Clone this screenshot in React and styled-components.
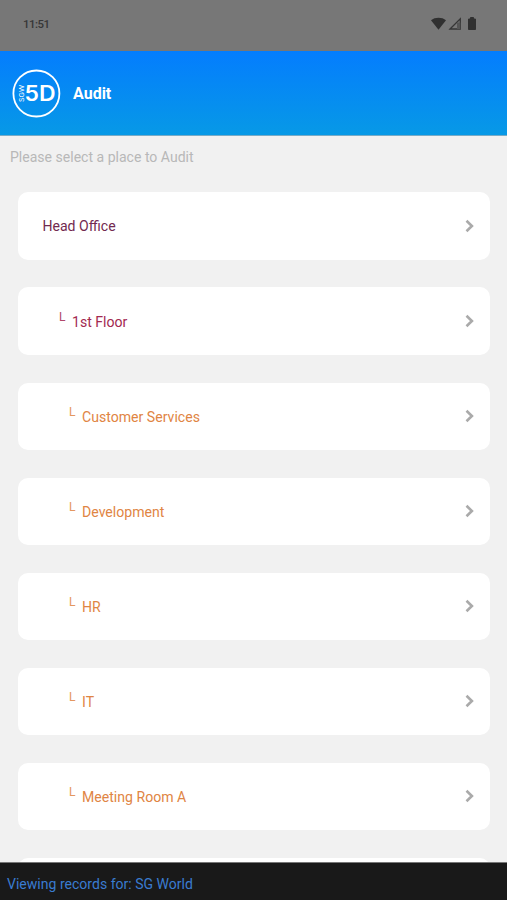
import React from "react";
import styled, { createGlobalStyle } from "styled-components";

const GlobalStyle = createGlobalStyle`
    * {
        box-sizing: border-box;
    }
    body {
        margin: 0;
        background: #f1f1f1;
        font-family: Roboto, "Liberation Sans", sans-serif;
    }
`;

const Screen = styled.div`
    display: flex;
    flex-direction: column;
    height: 900px;
    overflow: hidden;
    background: #f1f1f1;
`;

const StatusBar = styled.div`
    display: flex;
    flex: none;
    align-items: center;
    justify-content: space-between;
    height: 51px;
    padding: 0 29px 4px 23px;
    background: #777;
    color: #363636;
`;

const Clock = styled.span`
    font-size: 11.4px;
    font-weight: 500;
    letter-spacing: -0.5px;
`;

const Header = styled.header`
    display: flex;
    flex: none;
    align-items: center;
    gap: 12px;
    height: 85px;
    padding: 0 12px;
    background: linear-gradient(#047dfe, #0799e6);
    border-bottom: 1px solid #78abc6;
`;

const Title = styled.h1`
    margin: 1px 0 0;
    color: white;
    font-size: 16px;
    font-weight: 700;
`;

const Hint = styled.p`
    flex: none;
    margin: 0;
    padding: 11px 10px 0;
    height: 56.4px;
    color: #b8b8b8;
    font-size: 14.05px;
    line-height: 20px;
`;

const List = styled.ul`
    display: flex;
    flex: 1;
    flex-direction: column;
    gap: 27.9px;
    min-height: 0;
    margin: 0;
    padding: 0 17px 0 18px;
    overflow: hidden;
    list-style: none;
`;

const Place = styled.li`
    display: flex;
    flex: none;
    align-items: center;
    height: 67.2px;
    padding: 0 15px 0 ${({ indent }) => indent}px;
    border-radius: 10px;
    background: white;
    color: ${({ color }) => color};
    font-size: 14.1px;
`;

const Branch = styled.span`
    width: 13px;
    margin-top: -8px;
    font-size: 12px;
    font-weight: 400;
    opacity: 0.85;
`;

const Name = styled.span`
    flex: 1;
    margin-top: 1px;
`;

const Footer = styled.footer`
    flex: none;
    height: 38px;
    padding: 11px 7px 0;
    border-top: 1px solid #777;
    background: #191919;
    color: #3a7cd0;
    font-size: 14.05px;
    line-height: 20px;
`;

const places = [
    { name: "Head Office", indent: 24.4, color: "#722a50" },
    { name: "1st Floor", indent: 41, color: "#a32951", nested: true },
    { name: "Customer Services", indent: 51, color: "#df8544", nested: true },
    { name: "Development", indent: 51, color: "#df8544", nested: true },
    { name: "HR", indent: 51, color: "#df8544", nested: true },
    { name: "IT", indent: 51, color: "#df8544", nested: true },
    { name: "Meeting Room A", indent: 51, color: "#df8544", nested: true },
    { name: "", indent: 51, color: "#df8544" },
];

const StatusIcons = () => (
    <svg width="48" height="16" viewBox="0 0 48 16">
        <path d="M1 4.3C5 1 12 1 16 4.3L8.5 13.7z" fill="#303030" />
        <path d="M20 13L30.3 2.8V13z" fill="none" stroke="#363636" strokeWidth="1.3" />
        <path d="M27 6.5h3.3V13H27z" fill="#555" />
        <path d="M38.5 3h2V1.5h3V3h2v10.5h-7z" fill="#303030" stroke="#303030" strokeLinejoin="round" />
    </svg>
);

const Logo = () => (
    <svg width="49" height="49" viewBox="0 0 49 49" fill="white">
        <circle cx="24.4" cy="24.5" r="23" fill="none" stroke="white" strokeWidth="1.8" />
        <text
            transform="translate(12.2 33) rotate(-90)"
            fontFamily="Inter, sans-serif"
            fontSize="6.8"
            fontWeight="400"
            textLength="17"
            lengthAdjust="spacingAndGlyphs"
        >
            SGW
        </text>
        <text
            x="12.6"
            y="32"
            fontFamily="Inter, sans-serif"
            fontSize="20.8"
            fontWeight="600"
            textLength="31"
            lengthAdjust="spacingAndGlyphs"
        >
            5D
        </text>
    </svg>
);

const Chevron = () => (
    <svg width="11" height="14" viewBox="0 0 11 14">
        <path d="M2.5 1.8L7.9 7l-5.4 5.2" fill="none" stroke="#aaa" strokeWidth="2.6" />
    </svg>
);

const App = () => {
    return (
        <>
            <GlobalStyle />
            <Screen>
                <StatusBar>
                    <Clock>11:51</Clock>
                    <StatusIcons />
                </StatusBar>
                <Header>
                    <Logo />
                    <Title>Audit</Title>
                </Header>
                <Hint>Please select a place to Audit</Hint>
                <List>
                    {places.map((place, i) => (
                        <Place key={i} indent={place.indent} color={place.color}>
                            {place.nested && <Branch>L</Branch>}
                            <Name>{place.name}</Name>
                            <Chevron />
                        </Place>
                    ))}
                </List>
                <Footer>Viewing records for: SG World</Footer>
            </Screen>
        </>
    );
};

export default App;
